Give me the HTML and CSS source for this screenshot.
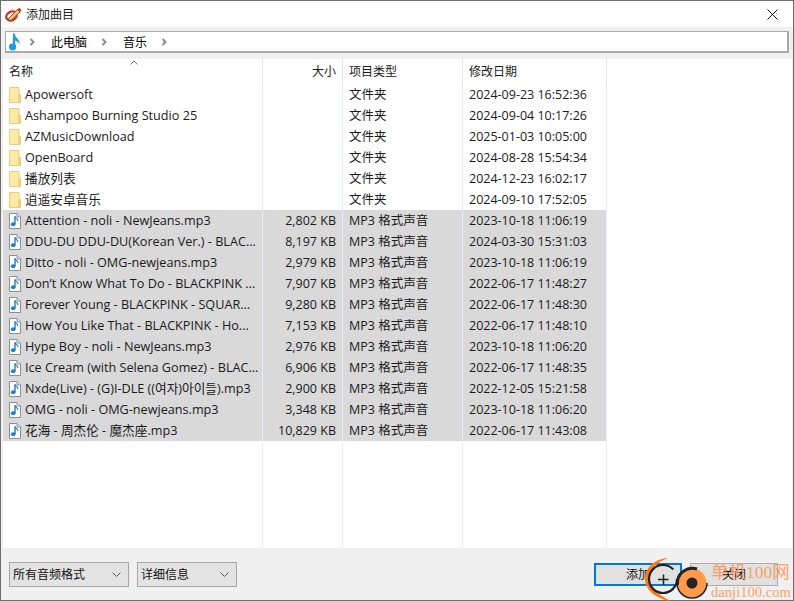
FILE: index.html
```html
<!DOCTYPE html>
<html lang="zh-CN">
<head>
  <meta charset="UTF-8" />
  <title>添加曲目</title>
  <link rel="stylesheet" href="styles.css">
</head>
<body>
  <svg class="defs" width="0" height="0">
    <symbol id="folder" viewBox="0 0 12 16">
      <path d="M0.5 0.5H10V7.500H11.500V15.500H0.5Z" fill="#fde9a8" stroke="#e9cd7b"/>
      <path d="M10 7.500V15" stroke="#e3bd55"/>
    </symbol>
    <symbol id="audio" viewBox="0 0 12 16">
      <path d="M0.5 0.5H8L11.5 4V15.5H0.5Z" fill="#fff" stroke="#8a8f96"/>
      <path d="M8 0.5V4H11.5" fill="#e4e6e8" stroke="#8a8f96"/>
      <path d="M6 3.5V11" stroke="#1a7fd0" stroke-width="1.4"/>
      <path d="M6 3.5C6.5 5.5 9 5.5 8.8 8" fill="none" stroke="#1a7fd0" stroke-width="1.2"/>
      <ellipse cx="4.2" cy="11.2" rx="2.3" ry="1.9" fill="#1a7fd0"/>
    </symbol>
    <symbol id="crumb" viewBox="0 0 6 8">
      <path d="M1.5 1L4.5 4L1.5 7" fill="none" stroke="#8c8c8c" stroke-width="2"/>
    </symbol>
  </svg>

  <div class="dialog">
    <div class="titlebar">
      <svg class="app-icon" width="17" height="15" viewBox="0 0 17 15">
        <ellipse cx="6.500" cy="9" rx="5.500" ry="4.200" transform="rotate(-28 6.500 9)" fill="none" stroke="#e0231c" stroke-width="2.200"/>
        <path d="M4 11L12.500 2.500L15 5L6.500 13L3 14Z" fill="#f3c46a" stroke="#7a5020"/>
        <path d="M12.500 2.500L14 0.800L16.500 3.200L15 5Z" fill="#e0231c"/>
      </svg>
      <span class="title">添加曲目</span>
      <svg class="close-x" width="11" height="11" viewBox="0 0 11 11">
        <path d="M0.5 0.5L10.5 10.5M10.5 0.5L0.5 10.5" stroke="#111" stroke-width="1"/>
      </svg>
    </div>

    <div class="pathband">
      <div class="pathbox">
        <svg class="note" width="12" height="18" viewBox="0 0 12 18">
          <path d="M5 0.500V14" stroke="#1e9be8" stroke-width="2.200"/>
          <path d="M5 0.500C6 5 11.500 6 10.500 11.500C10 9 7.500 7.800 5 7.200Z" fill="#1e9be8"/>
          <ellipse cx="3.600" cy="14" rx="3.600" ry="3.400" fill="#1e9be8"/>
        </svg>
        <svg class="crumb" width="6" height="8"><use href="#crumb"/></svg>
        <span class="crumb-text">此电脑</span>
        <svg class="crumb" width="6" height="8"><use href="#crumb"/></svg>
        <span class="crumb-text">音乐</span>
        <svg class="crumb" width="6" height="8"><use href="#crumb"/></svg>
      </div>
    </div>

    <div class="list">
      <div class="row head">
        <div class="cell name">名称</div>
        <div class="cell size">大小</div>
        <div class="cell">项目类型</div>
        <div class="cell">修改日期</div>
        <svg class="sort" width="8" height="5" viewBox="0 0 8 5"><path d="M0.5 4.5L4 1L7.500 4.5" fill="none" stroke="#777"/></svg>
      </div>

      <div class="row">
        <div class="cell name"><svg class="ico" width="12" height="16"><use href="#folder"/></svg><span class="fname">Apowersoft</span></div>
        <div class="cell size"></div><div class="cell">文件夹</div><div class="cell">2024-09-23 16:52:36</div>
      </div>
      <div class="row">
        <div class="cell name"><svg class="ico" width="12" height="16"><use href="#folder"/></svg><span class="fname">Ashampoo Burning Studio 25</span></div>
        <div class="cell size"></div><div class="cell">文件夹</div><div class="cell">2024-09-04 10:17:26</div>
      </div>
      <div class="row">
        <div class="cell name"><svg class="ico" width="12" height="16"><use href="#folder"/></svg><span class="fname">AZMusicDownload</span></div>
        <div class="cell size"></div><div class="cell">文件夹</div><div class="cell">2025-01-03 10:05:00</div>
      </div>
      <div class="row">
        <div class="cell name"><svg class="ico" width="12" height="16"><use href="#folder"/></svg><span class="fname">OpenBoard</span></div>
        <div class="cell size"></div><div class="cell">文件夹</div><div class="cell">2024-08-28 15:54:34</div>
      </div>
      <div class="row">
        <div class="cell name"><svg class="ico" width="12" height="16"><use href="#folder"/></svg><span class="fname">播放列表</span></div>
        <div class="cell size"></div><div class="cell">文件夹</div><div class="cell">2024-12-23 16:02:17</div>
      </div>
      <div class="row">
        <div class="cell name"><svg class="ico" width="12" height="16"><use href="#folder"/></svg><span class="fname">逍遥安卓音乐</span></div>
        <div class="cell size"></div><div class="cell">文件夹</div><div class="cell">2024-09-10 17:52:05</div>
      </div>

      <div class="row selected">
        <div class="cell name"><svg class="ico" width="12" height="16"><use href="#audio"/></svg><span class="fname">Attention - noli - NewJeans.mp3</span></div>
        <div class="cell size">2,802 KB</div><div class="cell">MP3 格式声音</div><div class="cell">2023-10-18 11:06:19</div>
      </div>
      <div class="row selected">
        <div class="cell name"><svg class="ico" width="12" height="16"><use href="#audio"/></svg><span class="fname">DDU-DU DDU-DU(Korean Ver.) - BLAC...</span></div>
        <div class="cell size">8,197 KB</div><div class="cell">MP3 格式声音</div><div class="cell">2024-03-30 15:31:03</div>
      </div>
      <div class="row selected">
        <div class="cell name"><svg class="ico" width="12" height="16"><use href="#audio"/></svg><span class="fname">Ditto - noli - OMG-newjeans.mp3</span></div>
        <div class="cell size">2,979 KB</div><div class="cell">MP3 格式声音</div><div class="cell">2023-10-18 11:06:19</div>
      </div>
      <div class="row selected">
        <div class="cell name"><svg class="ico" width="12" height="16"><use href="#audio"/></svg><span class="fname">Don’t Know What To Do - BLACKPINK ...</span></div>
        <div class="cell size">7,907 KB</div><div class="cell">MP3 格式声音</div><div class="cell">2022-06-17 11:48:27</div>
      </div>
      <div class="row selected">
        <div class="cell name"><svg class="ico" width="12" height="16"><use href="#audio"/></svg><span class="fname">Forever Young - BLACKPINK - SQUAR...</span></div>
        <div class="cell size">9,280 KB</div><div class="cell">MP3 格式声音</div><div class="cell">2022-06-17 11:48:30</div>
      </div>
      <div class="row selected">
        <div class="cell name"><svg class="ico" width="12" height="16"><use href="#audio"/></svg><span class="fname">How You Like That - BLACKPINK - Ho...</span></div>
        <div class="cell size">7,153 KB</div><div class="cell">MP3 格式声音</div><div class="cell">2022-06-17 11:48:10</div>
      </div>
      <div class="row selected">
        <div class="cell name"><svg class="ico" width="12" height="16"><use href="#audio"/></svg><span class="fname">Hype Boy - noli - NewJeans.mp3</span></div>
        <div class="cell size">2,976 KB</div><div class="cell">MP3 格式声音</div><div class="cell">2023-10-18 11:06:20</div>
      </div>
      <div class="row selected">
        <div class="cell name"><svg class="ico" width="12" height="16"><use href="#audio"/></svg><span class="fname">Ice Cream (with Selena Gomez) - BLAC...</span></div>
        <div class="cell size">6,906 KB</div><div class="cell">MP3 格式声音</div><div class="cell">2022-06-17 11:48:35</div>
      </div>
      <div class="row selected">
        <div class="cell name"><svg class="ico" width="12" height="16"><use href="#audio"/></svg><span class="fname">Nxde(Live) - (G)I-DLE ((여자)아이들).mp3</span></div>
        <div class="cell size">2,900 KB</div><div class="cell">MP3 格式声音</div><div class="cell">2022-12-05 15:21:58</div>
      </div>
      <div class="row selected">
        <div class="cell name"><svg class="ico" width="12" height="16"><use href="#audio"/></svg><span class="fname">OMG - noli - OMG-newjeans.mp3</span></div>
        <div class="cell size">3,348 KB</div><div class="cell">MP3 格式声音</div><div class="cell">2023-10-18 11:06:20</div>
      </div>
      <div class="row selected">
        <div class="cell name"><svg class="ico" width="12" height="16"><use href="#audio"/></svg><span class="fname">花海 - 周杰伦 - 魔杰座.mp3</span></div>
        <div class="cell size">10,829 KB</div><div class="cell">MP3 格式声音</div><div class="cell">2022-06-17 11:43:08</div>
      </div>

      <div class="row filler">
        <div class="cell"></div><div class="cell"></div><div class="cell"></div><div class="cell"></div>
      </div>
    </div>

    <div class="footer">
      <div class="combo combo-format"><span>所有音频格式</span><svg width="9" height="5" viewBox="0 0 9 5"><path d="M0.5 0.5L4.5 4.5L8.5 0.5" fill="none" stroke="#555"/></svg></div>
      <div class="combo combo-view"><span>详细信息</span><svg width="9" height="5" viewBox="0 0 9 5"><path d="M0.5 0.5L4.5 4.5L8.5 0.5" fill="none" stroke="#555"/></svg></div>
      <div class="btn btn-default">添加</div>
      <div class="btn">关闭</div>
    </div>
  </div>

  <!-- watermark over the corner -->
  <svg class="wm-icon" width="70" height="50" viewBox="0 0 70 50">
    <path d="M24 3C9 4 1 14 1 24C1 35 12 44 27 46C16 41 6 34 6 24C6 14 13 7 24 3Z" fill="#ff7a14"/>
    <circle cx="19" cy="24" r="14" fill="none" stroke="#222" stroke-width="2.200" stroke-dasharray="77 11"/>
    <path d="M14 24.500H24.500M19.500 19.500V30" stroke="#222" stroke-width="1.500"/>
    <circle cx="48" cy="28" r="14.500" fill="#ff9a4a"/>
    <circle cx="48" cy="28" r="15" fill="none" stroke="#222" stroke-width="1.500" stroke-dasharray="60 34"/>
    <path d="M33.500 30A15 15 0 0 1 53 14" fill="none" stroke="#222" stroke-width="3"/>
    <circle cx="48" cy="28" r="5.500" fill="#2a2320"/>
  </svg>
  <div class="wm-text">
    <div class="wm-cn">单机100网</div>
    <div class="wm-en">danji100.com</div>
  </div>
</body>
</html>
```

FILE: styles.css
```css
html, body {
  margin: 0;
  height: 100%;
  overflow: hidden;
}
body {
  position: relative;
  font-family: "Open Sans", "Noto Sans CJK SC", sans-serif;
  font-size: 12.5px;
  color: #111;
  background: #fff;
}
.defs {
  position: absolute;
}
.dialog {
  height: 100%;
  box-sizing: border-box;
  display: flex;
  flex-direction: column;
  border: 1px solid #6e6e6e;
  background: #f0f0f0;
}

/* title bar */
.titlebar {
  height: 26px;
  flex: none;
  display: flex;
  align-items: center;
  padding: 0 15px 0 4px;
  background: #fff;
}
.app-icon {
  flex: none;
  margin-right: 4px;
}
.title {
  font-size: 12px;
  color: #222;
}
.close-x {
  margin-left: auto;
}

/* path box */
.pathband {
  height: 32px;
  flex: none;
  box-sizing: border-box;
  padding: 4px 4px 6px 4px;
  background: #f0f0f0;
}
.pathbox {
  height: 22px;
  box-sizing: border-box;
  display: flex;
  align-items: center;
  padding-left: 3px;
  background: #fff;
  border: 1px solid #a9a9a9;
  border-width: 1px 2px 2px 1px;
}
.note {
  flex: none;
  margin-right: 8px;
}
.crumb {
  flex: none;
}
.crumb-text {
  margin: 0 14px 0 16px;
  font-size: 12px;
  color: #000;
}

/* list */
.list {
  flex: 1;
  min-height: 0;
  display: flex;
  flex-direction: column;
  margin: 0 1px 0 2px;
  background: #fff;
}
.row {
  display: grid;
  grid-template-columns: 260px 80px 120px 144px;
  height: 21px;
  flex: none;
}
.row .cell {
  box-sizing: border-box;
  padding: 0 6px;
  line-height: 21px;
  white-space: nowrap;
  overflow: hidden;
  border-right: 1px solid #e6effa;
  color: #1a1a1a;
}
.row .cell.name {
  display: flex;
  align-items: center;
  padding: 0 0 0 6px;
}
.row .cell.size {
  text-align: right;
}
.fname {
  font-size: 12.65px;
  white-space: nowrap;
}
.ico {
  flex: none;
  margin-right: 4px;
}
.head {
  position: relative;
  height: 25px;
}
.head .cell {
  line-height: 25px;
  font-size: 12px;
  border-right-color: #e5e5e5;
}
.sort {
  position: absolute;
  left: 127px;
  top: 1px;
}
.selected .cell {
  background: #d9d9d9;
}
.row.filler {
  flex: 1;
}

/* bottom buttons */
.footer {
  height: 52px;
  flex: none;
  box-sizing: border-box;
  display: flex;
  align-items: center;
  padding: 0 15px 0 8px;
  background: #f0f0f0;
}
.combo {
  height: 25px;
  box-sizing: border-box;
  display: flex;
  align-items: center;
  justify-content: space-between;
  padding: 0 7px 0 3px;
  background: #e3e3e3;
  border: 1px solid #a6a6a6;
  font-size: 12px;
  margin-right: 8px;
}
.combo-format {
  width: 120px;
}
.combo-view {
  width: 100px;
}
.btn {
  width: 88px;
  height: 23px;
  box-sizing: border-box;
  text-align: center;
  line-height: 21px;
  font-size: 12px;
  background: #e1e1e1;
  border: 1px solid #adadad;
  margin-left: 8px;
}
.btn-default {
  margin-left: auto;
  border: 2px solid #0078d7;
  line-height: 19px;
}

/* watermark */
.wm-icon {
  position: absolute;
  left: 644px;
  top: 555px;
}
.wm-text {
  position: absolute;
  left: 711px;
  top: 561px;
  font-family: "Liberation Serif", "Noto Sans CJK SC", serif;
  color: #ff9350;
  opacity: 0.85;
  white-space: nowrap;
}
.wm-cn {
  font-size: 17.5px;
  line-height: 23px;
}
.wm-en {
  font-size: 14.6px;
  line-height: 16px;
}
```
